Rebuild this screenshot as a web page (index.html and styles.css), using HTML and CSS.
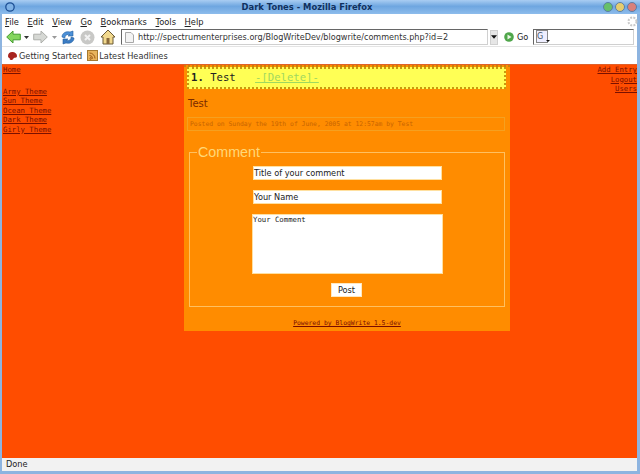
FILE: index.html
```html
<!DOCTYPE html>
<html lang="en">
<head>
<meta charset="utf-8">
<title>Dark Tones - Mozilla Firefox</title>
<link rel="stylesheet" href="styles.css">
</head>
<body>
<div class="window">
  <header class="titlebar">
    <svg class="wm-icon" width="12" height="12" viewBox="0 0 12 12"><circle cx="6" cy="6" r="4.2" fill="#7fb2e6" stroke="#1c4f94" stroke-width="1.3"/></svg>
    <span class="title">Dark Tones - Mozilla Firefox</span>
    <span class="wm-buttons">
      <i class="wm wm-green"></i><i class="wm wm-yellow"></i><i class="wm wm-red"></i>
    </span>
  </header>
  <nav class="menubar">
    <span class="menu"><u>F</u>ile</span><span class="menu"><u>E</u>dit</span><span class="menu"><u>V</u>iew</span><span class="menu"><u>G</u>o</span><span class="menu"><u>B</u>ookmarks</span><span class="menu"><u>T</u>ools</span><span class="menu"><u>H</u>elp</span>
    <svg class="throbber" width="11" height="11" viewBox="0 0 11 11"><circle cx="5.5" cy="5.5" r="4" fill="none" stroke="#c9c9c9" stroke-width="2" stroke-dasharray="2 1.2"/></svg>
  </nav>
  <div class="toolbar">
    <svg class="back" width="15" height="14" viewBox="0 0 15 14"><path d="M.7 7 7 1V4.200H14.300V9.800H7V13Z" fill="#84d65e" stroke="#459c30"/></svg>
    <svg class="drop drop-back" width="5" height="3" viewBox="0 0 5 3"><path d="M0 0H5L2.500 3Z" fill="#333"/></svg>
    <svg class="forward" width="15" height="14" viewBox="0 0 15 14"><path d="M14.300 7 8 1V4.200H.7V9.800H8V13Z" fill="#d6d8d4" stroke="#adafab"/></svg>
    <svg class="drop drop-fwd" width="5" height="3" viewBox="0 0 5 3"><path d="M0 0H5L2.500 3Z" fill="#999"/></svg>
    <svg class="reload" width="16" height="15" viewBox="0 0 16 15"><path d="M2 7C2 3 6 1 10 2L13 1V6H8L10 4.500C7 4 5 5 4.800 8Z" fill="#4b90d8" stroke="#23609f" stroke-width=".6"/><path d="M14 8C14 12 10 14 6 13L3 14V9H8L6 10.500C9 11 11 10 11.200 7Z" fill="#3a7cc4" stroke="#23609f" stroke-width=".6"/></svg>
    <svg class="stop" width="15" height="15" viewBox="0 0 15 15"><circle cx="7.500" cy="7.500" r="7" fill="#c8c8c6"/><path d="M5 5 10 10M10 5 5 10" stroke="#f2f2f2" stroke-width="2"/></svg>
    <svg class="home" width="16" height="16" viewBox="0 0 16 16"><path d="M8 1 1 8H3V15H13V8H15Z" fill="#f1d88d" stroke="#6b5a35"/><rect x="6.500" y="9" width="3" height="6" fill="#8a6a3c"/></svg>
    <div class="urlbar">
      <svg width="9" height="11" viewBox="0 0 9 11"><path d="M.5.500H6L8.500 3V10.500H.5Z" fill="#f3f3f3" stroke="#a8a8a8"/></svg>
      <span class="url">http://spectrumenterprises.org/BlogWriteDev/blogwrite/comments.php?id=2</span>
    </div>
    <div class="urldrop"><svg width="7" height="4" viewBox="0 0 7 4"><path d="M0 0H7L3.500 4Z" fill="#111"/></svg></div>
    <svg class="go-icon" width="10" height="10" viewBox="0 0 10 10"><circle cx="5" cy="5" r="4.800" fill="#4fa64a"/><path d="M3.500 2.500 7.500 5 3.500 7.500Z" fill="#e9f6e4"/></svg>
    <span class="go">Go</span>
    <div class="search">
      <span class="engine">G</span>
    </div>
  </div>
  <div class="bookmarks">
    <svg width="11" height="10" viewBox="0 0 11 10"><path d="M1 5C1 2 3.500.5 6 1S10 3 10 5 8 6.500 7 7 6 9.500 4 9 3 7 2.500 7 1 6.500 1 5Z" fill="#a8241f"/></svg>
    <span class="bm">Getting Started</span>
    <svg class="feed" width="11" height="11" viewBox="0 0 11 11"><rect x=".5" y=".5" width="10" height="10" fill="#e8b45c" stroke="#a67a30"/><path d="M3 8.500A.8.800 0 1 0 3 8.400M2.500 5.500A3 3 0 0 1 5.500 8.500M2.500 3A5.500 5.500 0 0 1 8 8.500" fill="none" stroke="#9c5a16"/></svg>
    <span class="bm">Latest Headlines</span>
  </div>
  <main class="page">
    <aside class="left-nav">
      <a href="#">Home</a>
      <div class="themes">
        <a href="#">Army Theme</a>
        <a href="#">Sun Theme</a>
        <a href="#">Ocean Theme</a>
        <a href="#">Dark Theme</a>
        <a href="#">Girly Theme</a>
      </div>
    </aside>
    <section class="content">
      <h1 class="post-title"><b>1.</b> Test <a class="delete" href="#">-[Delete]-</a></h1>
      <p class="post-body">Test</p>
      <p class="post-meta">Posted on Sunday the 19th of June, 2005 at 12:57am by Test</p>
      <fieldset class="comment-box">
        <legend>Comment</legend>
        <div class="field">Title of your comment</div>
        <div class="field">Your Name</div>
        <div class="area">Your Comment</div>
        <div class="post-row"><span class="post-btn">Post</span></div>
      </fieldset>
      <p class="powered"><a href="#">Powered by BlogWrite 1.5-dev</a></p>
    </section>
    <aside class="right-nav">
      <a href="#">Add Entry</a>
      <a href="#">Logout</a>
      <a href="#">Users</a>
    </aside>
  </main>
  <footer class="status">Done</footer>
</div>
</body>
</html>
```
FILE: styles.css
```css
* { box-sizing: border-box; }
html, body { margin: 0; height: 100%; overflow: hidden; }
body { font-family: "DejaVu Sans", sans-serif; font-size: 8.2px; color: #222; background: #fff; }
a { color: #7a0c00; }
.window { width: 640px; height: 474px; display: flex; flex-direction: column; background: #fff; border: solid #8db4e0; border-width: 0 3px 3px 2px; }
.titlebar { height: 14px; flex: none; margin: 0 -3px 0 -2px; padding: 0 2px 0 4px; display: flex; align-items: center; position: relative; background: linear-gradient(#a9cdf2, #6ea6e0 45%, #8dbcec); }
.title { position: absolute; left: 0; right: 26px; text-align: center; font-weight: bold; font-size: 8.4px; color: #10315f; }
.wm-buttons { margin-left: auto; display: flex; gap: 2px; position: relative; margin-right: 1px; }
.wm { width: 10px; height: 10px; border-radius: 50%; border: 1px solid #5a7ea8; display: block; }
.wm-green { background: #67c06a; }
.wm-yellow { background: #e6cd6e; }
.wm-red { background: #d9807a; }
.menubar { height: 14px; padding: 1px 0 0 3px; display: flex; align-items: center; gap: 8.600px; font-size: 8.300px; flex: none; }
.throbber { margin-left: auto; margin-right: -1px; }
.toolbar { height: 19px; flex: none; display: flex; align-items: center; padding-left: 0; border-bottom: 1px solid #e4e4e4; }
.back { margin-left: 4px; flex: none; }
.drop { flex: none; }
.drop-back { margin-left: 3px; }
.forward { margin-left: 4px; flex: none; }
.drop-fwd { margin-left: 4px; }
.reload { margin-left: 3px; flex: none; }
.stop { margin-left: 4px; flex: none; }
.home { margin-left: 5px; flex: none; }
.urlbar { margin-left: 5px; width: 367px; height: 16px; display: flex; align-items: center; gap: 4px; padding-left: 3px; border: 1px solid #d0d0d0; border-top-color: #666; border-left-color: #666; flex: none; }
.url { font-size: 8.100px; white-space: nowrap; color: #333; }
.urldrop { width: 8px; height: 15px; margin-left: 2px; display: flex; align-items: center; justify-content: center; background: #e6e6e6; border: 1px solid #d0d0d0; flex: none; }
.go-icon { margin-left: 6px; flex: none; }
.go { margin-left: 3px; width: 12px; font-size: 8.200px; }
.search { margin-left: 4px; width: 101px; height: 16px; flex: none; border: 1px solid #d0d0d0; border-top-color: #666; border-left-color: #666; padding-left: 2px; }
.engine { display: block; width: 12px; height: 13px; line-height: 12px; border: 1px solid #888; font-size: 8px; color: #456; background: #eef; position: relative; }
.engine::after { content: ""; position: absolute; right: -3px; bottom: 0; border: solid transparent; border-width: 2px 2px 0; border-top-color: #111; }
.bookmarks { height: 17px; flex: none; display: flex; align-items: center; padding-left: 5px; gap: 1px; font-size: 8.200px; }
.bm { color: #333; }
.feed { margin-left: 4px; }
.page { flex: 1; min-height: 0; display: grid; grid-template-columns: 182px 326px 1fr; background: #ff4d00; border-top: 1px solid #e0602a; font-family: "DejaVu Sans Mono", monospace; font-size: 7.300px; line-height: 9.500px; }
.left-nav { padding: 0 0 0 1px; display: flex; flex-direction: column; align-items: flex-start; }
.themes { margin-top: 12px; display: flex; flex-direction: column; align-items: flex-start; }
.left-nav a, .right-nav a { color: #7a1000; }
.right-nav { display: flex; flex-direction: column; align-items: flex-end; }
.content { height: 266px; background: #ff8c00; border-top: 2px dotted #c8820a; padding: 0 3px 0 3px; }
.post-title { margin: 0; height: 22px; width: 319px; padding: 1px 2px 0; background: #ffff55; border: 2px dotted #c89a10; font-family: "DejaVu Sans Mono", monospace; font-size: 10.600px; line-height: 15px; font-weight: normal; color: #222; white-space: pre-wrap; }
.delete { margin-left: 13px; color: #9fd860; }
.post-body { margin: 9px 0 0 1px; font-family: "DejaVu Sans", sans-serif; font-size: 10px; line-height: 11px; color: #7a2a00; }
.post-meta { margin: 8px 0 0; width: 318px; height: 14px; padding: 2px 2px 0; border: 1px solid #f5a020; font-size: 6.400px; line-height: 9px; color: #c86400; }
.comment-box { margin: 14px 0 0 2px; width: 316px; height: 162px; min-width: 0; padding: 0; border: 1px solid #ffc060; display: flex; flex-direction: column; align-items: flex-start; }
.comment-box legend { margin-left: 7px; padding: 0 1px; font-family: "Liberation Sans", sans-serif; font-size: 14.300px; line-height: 14px; color: #ffd878; }
.field { margin: 0 0 10px 63px; width: 189px; height: 14px; background: #fff; border: 1px solid #ffe0a0; font-family: "DejaVu Sans", sans-serif; font-size: 8.200px; line-height: 12px; color: #222; }
.field:first-of-type { margin-top: 7px; }
.area { margin: 0 0 0 62px; width: 191px; height: 60px; background: #fff; border: 1px solid #ffe0a0; font-size: 7.300px; line-height: 10px; color: #222; }
.post-row { width: 100%; display: flex; justify-content: center; margin-top: 9px; padding-right: 1px; }
.post-btn { width: 31px; height: 14px; background: #fff; border: 1px solid #ffe8c0; text-align: center; font-family: "DejaVu Sans", sans-serif; font-size: 8.200px; line-height: 13px; color: #222; }
.powered { margin: 12px 0 0; text-align: center; font-size: 6.400px; line-height: 9px; }
.status { height: 13px; flex: none; background: #f2f2f2; padding-left: 4px; font-size: 8.200px; line-height: 13px; color: #222; }
```
